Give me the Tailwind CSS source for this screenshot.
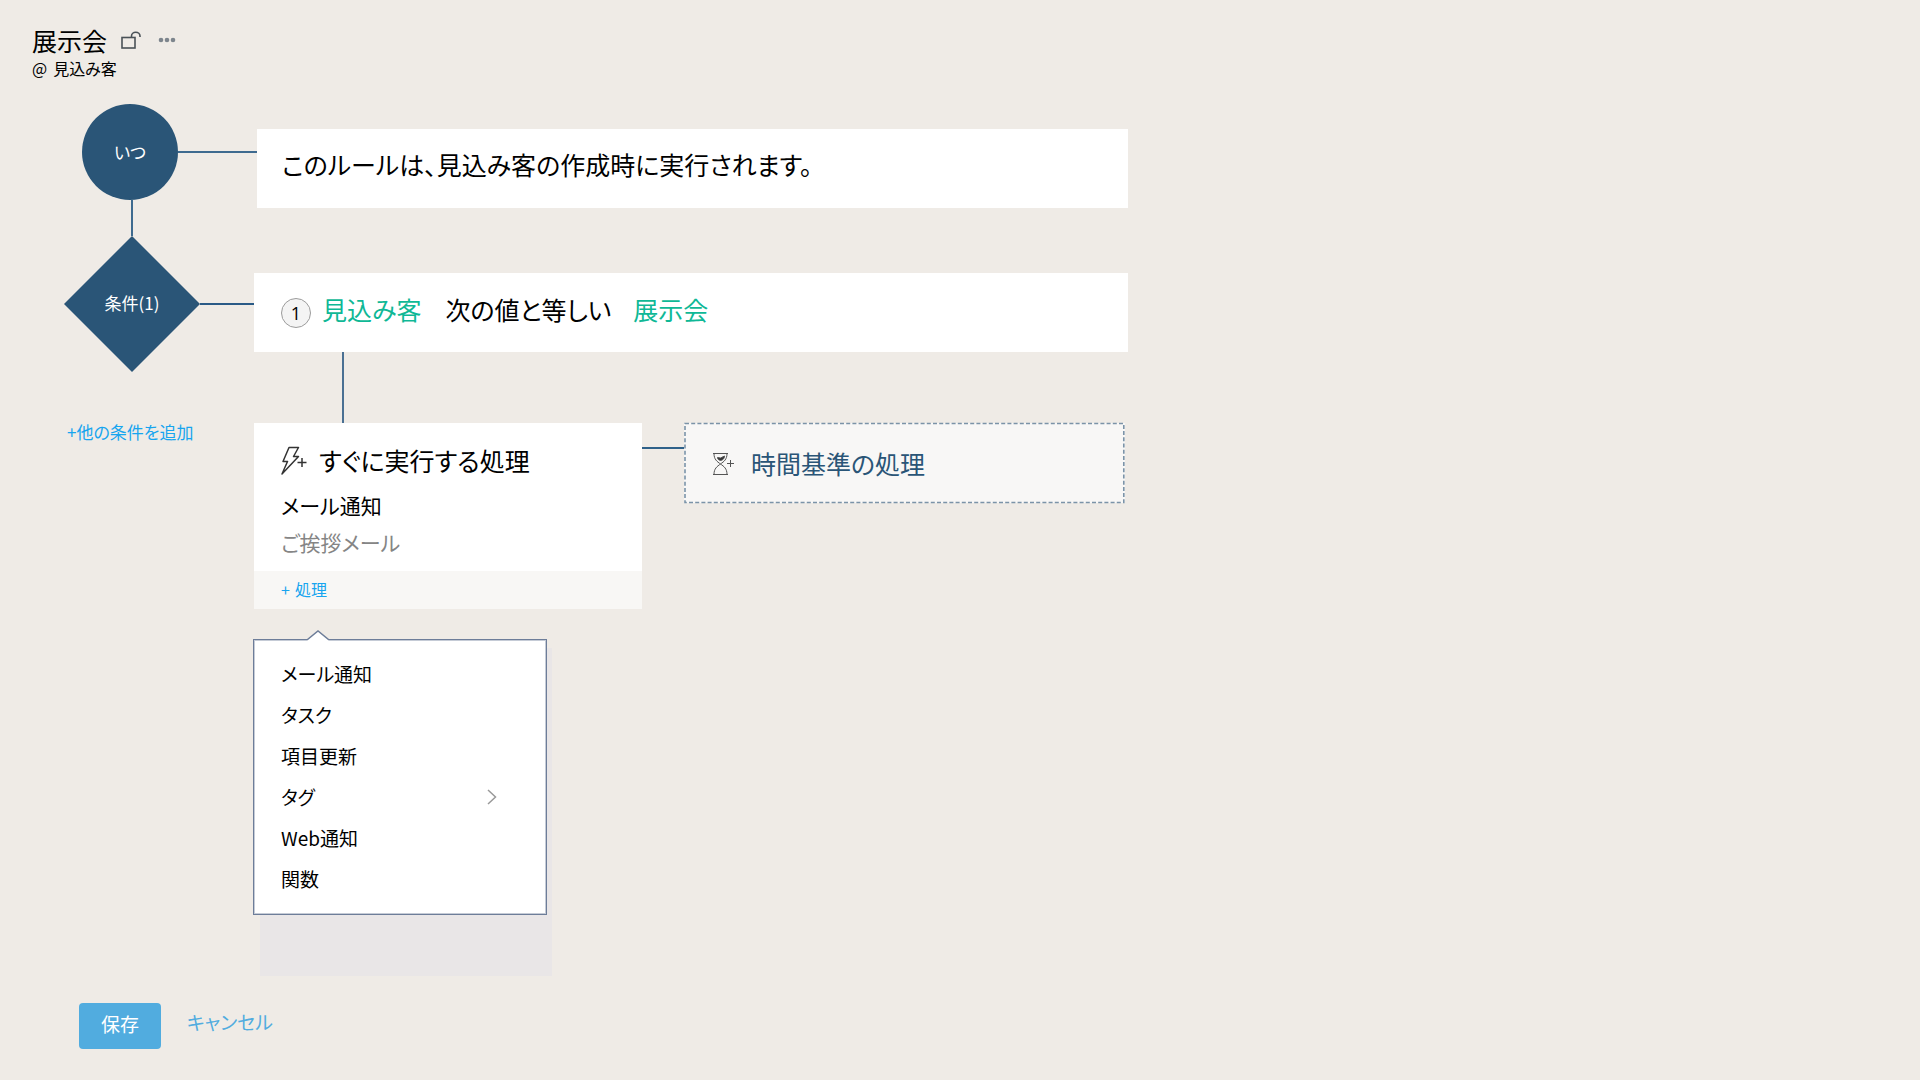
<!DOCTYPE html>
<html lang="ja">
<head>
<meta charset="utf-8">
<meta name="viewport" content="width=device-width, initial-scale=1">
<title>展示会</title>
<script src="https://cdn.jsdelivr.net/npm/@tailwindcss/browser@4"></script>
</head>
<body class="min-h-screen bg-[#efebe6] pb-8 font-['Noto_Sans_CJK_JP',sans-serif] text-black [font-feature-settings:'palt']">
<header class="pt-6 pl-8">
  <div class="flex items-center">
    <h1 class="text-[25px] leading-8">展示会</h1>
    <button type="button" aria-label="ロック解除" class="ml-[14px]">
      <svg class="block" width="20" height="18" viewBox="0 0 20 18" fill="none" stroke="#4a5257" stroke-width="1.6"><rect x="1" y="6.5" width="13" height="10.5"/><path d="M10.5 6.5V5a4 3.6 0 0 1 8.500 0v1"/></svg>
    </button>
    <button type="button" aria-label="その他" class="ml-[17px]">
      <svg class="block" width="18" height="6" viewBox="0 0 18 6" fill="#7d858d"><circle cx="3" cy="3" r="2.300"/><circle cx="9" cy="3" r="2.300"/><circle cx="15" cy="3" r="2.300"/></svg>
    </button>
  </div>
  <p class="flex gap-1.5 text-base leading-6"><span>@</span><span>見込み客</span></p>
</header>

<main class="mt-6 flex max-w-[1128px] pl-16">
  <!-- Steps -->
  <div class="w-[190px] shrink-0">
    <div class="-mr-[3px] flex items-center pl-[18px]">
      <div class="flex size-24 items-center justify-center rounded-full bg-[#2a5577] text-[17px] text-white">いつ</div>
      <div class="h-0.5 flex-1 bg-[#3e6a8f]"></div>
    </div>
    <div class="ml-[67px] h-9 w-0.5 bg-[#3e6a8f]"></div>
    <div class="flex items-center">
      <div class="flex size-[136px] items-center justify-center bg-[#2a5577] pb-0.5 text-[17px] text-white [clip-path:polygon(50%_0,100%_50%,50%_100%,0_50%)]">条件(1)</div>
      <div class="h-0.5 flex-1 bg-[#2a5a86]"></div>
    </div>
    <a href="#" class="mt-12 block pl-[3px] text-[17px] leading-6 text-[#17a5ef]">+他の条件を追加</a>
  </div>

  <!-- Rule details -->
  <div class="min-w-0 flex-1 pt-[25px]">
    <section class="ml-[3px] flex h-[79px] items-center bg-white px-[25px] pb-2 text-[25px]">このルールは、見込み客の作成時に実行されます。</section>

    <section class="mt-[65px] flex h-[79px] items-center bg-white px-[27px] text-[25px]">
      <span class="mr-[11px] flex size-[30px] items-center justify-center rounded-full border border-[#9c9c9c] bg-[#f4f4f4] font-['Open_Sans',sans-serif] text-lg">1</span>
      <span class="mr-6 pb-1.5 text-[#0fb896]">見込み客</span>
      <span class="mr-[22px] pb-1.5">次の値と等しい</span>
      <span class="pb-1.5 text-[#0fb896]">展示会</span>
    </section>

    <div class="ml-[88px] h-[71px] w-0.5 bg-[#4a7093]"></div>

    <div class="flex items-start">
      <section class="w-[388px] shrink-0 bg-white">
        <div class="flex h-[148px] flex-col pt-[19px] pl-[27px]">
          <h2 class="flex items-center text-[25px] leading-9">
            <svg class="mr-3 block" width="26" height="30" viewBox="0 0 26 30" fill="none" stroke="#333" stroke-width="1.500"><path d="M8 2.500H17.500L12.500 11.500H17.500L1 29L6.500 16.500H2Z" stroke-linejoin="round"/><path d="M16.500 17.500h9M21 13v9"/></svg>
            すぐに実行する処理</h2>
          <h3 class="mt-[11px] text-[21px] leading-8">メール通知</h3>
          <p class="mt-[5px] text-[21px] leading-8 text-[#858585]">ご挨拶メール</p>
        </div>
        <div class="flex h-[38px] items-center bg-[#f8f7f5] pb-0.5 pl-[27px]">
          <button type="button" class="flex gap-[5px] text-base text-[#17a5ef]"><span>+</span><span>処理</span></button>
        </div>
      </section>
      <div class="mt-6 h-0.5 w-[42px] shrink-0 bg-[#2f6189]"></div>
      <button type="button" class="relative mr-[3px] flex h-20 flex-1 items-center bg-[#f8f7f6] pt-0.5 pl-[29px] text-[25px] text-[#2a5577]">
        <svg class="absolute inset-0 size-full overflow-visible" fill="none"><rect x="1" y="0.500" width="99.500%" height="79" stroke="#7b93a8" stroke-width="1.600" stroke-dasharray="4 2.200"/></svg>
        <svg class="mr-4 block" width="22" height="24" viewBox="0 0 22 24" fill="none" stroke="#555" stroke-width="1"><path d="M0 1.500h15M0 22.500h15M1 1.500c0 6 3 8 6.500 10.500c3.500-2.500 6.500-4.500 6.500-10.500M1 22.500c0-6 3-8 6.500-10.500c3.500 2.500 6.500 4.500 6.500 10.500"/><path d="M4.500 5.500l3 .5l4-2c0 2.500-1.500 4-4 4.500c-2-.5-3-1.500-3-3Z" fill="#333"/><path d="M14 11.500h7M17.500 8v7"/></svg>
        <span>時間基準の処理</span>
      </button>
    </div>

    <!-- Action picker -->
    <div class="relative mt-[30px] -ml-px h-[276px] w-[294px]">
      <div class="absolute top-[9px] left-[7px] h-[328px] w-[292px] bg-[#e9e6e7]"></div>
      <ul class="relative h-full border border-[#6d7d99] bg-white pt-[13px] pl-[27px] text-[19px] leading-[41px] outline -outline-offset-2 outline-[#6d7d99]/40">
        <li><button type="button">メール通知</button></li>
        <li><button type="button">タスク</button></li>
        <li><button type="button">項目更新</button></li>
        <li><button type="button" class="flex w-[216px] items-center justify-between">タグ
          <svg width="10" height="16" viewBox="0 0 10 16" fill="none" stroke="#999" stroke-width="1.500"><path d="M1 1l7.500 7L1 15"/></svg></button></li>
        <li><button type="button">Web通知</button></li>
        <li><button type="button">関数</button></li>
      </ul>
      <svg class="absolute -top-[9px] left-[54px]" width="22" height="12" viewBox="0 0 22 12"><path d="M0 10L11 1L22 10V12H0Z" fill="#fff"/><path d="M0 10L11 1L22 10" fill="none" stroke="#6d7d99" stroke-width="1.400"/></svg>
    </div>
  </div>
</main>

<footer class="mt-[88px] flex pl-[79px] text-[19px]">
  <button type="button" class="h-[46px] w-[82px] rounded bg-[#51acdf] pb-1 text-white">保存</button>
  <a href="#" class="ml-[26px] leading-[38px] text-[#51acdf]">キャンセル</a>
</footer>
</body>
</html>
